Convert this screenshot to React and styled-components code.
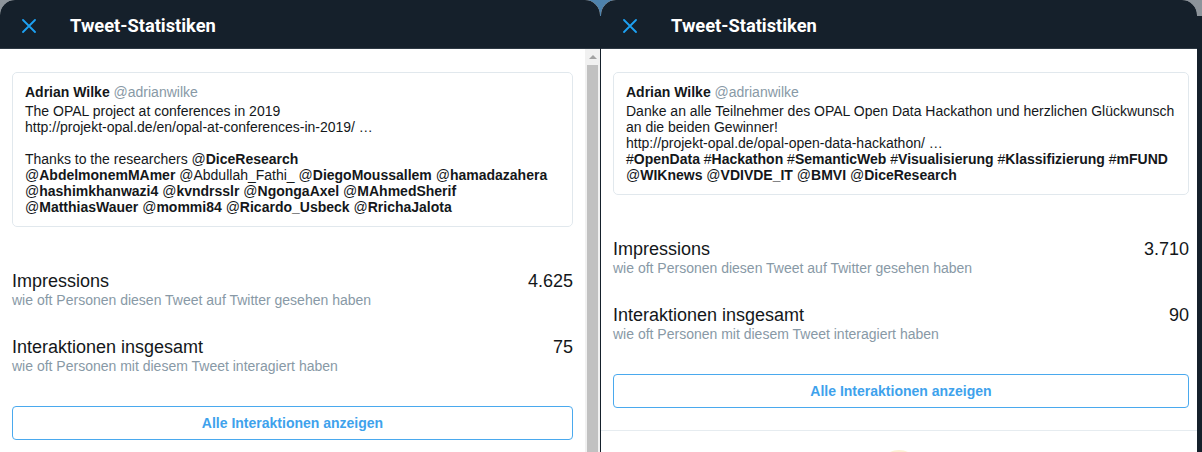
import React from "react";
import styled, { createGlobalStyle } from "styled-components";

const GlobalStyle = createGlobalStyle`
  html, body { margin: 0; padding: 0; height: 100%; overflow: hidden; }
  body { font-family: "Liberation Sans", Arial, sans-serif; }
  #root { height: 100%; }
`;

const Stage = styled.div`
  display: flex;
  height: 452px;
  overflow: hidden;
  background:
    linear-gradient(#15202b, #15202b) 0 16px / 100% 100% no-repeat,
    linear-gradient(90deg, #8d949b 0%, #75879a 40%, #4d82ad 50%, #75879a 60%, #8d949b 100%);
`;

const Panel = styled.section`
  flex: none;
  width: ${(p) => p.$w}px;
  margin-right: ${(p) => p.$mr}px;
  display: flex;
  flex-direction: column;
  border-radius: 15px 15px 0 0;
  overflow: hidden;
  background: #fff;
`;

const Header = styled.header`
  flex: none;
  height: 45px;
  padding: 3px 0 0 22px;
  display: flex;
  align-items: center;
  background: #15202b;
  border-bottom: 1px solid #2e3944;
`;

const CloseButton = styled.span`
  display: flex;
  width: 14px;
  height: 14px;
`;

const Title = styled.h1`
  margin: 0 0 0 34px;
  font-family: Roboto, "Liberation Sans", Arial, sans-serif;
  font-size: 18.3px;
  font-weight: 700;
  color: #fff;
  line-height: 22px;
`;

const Body = styled.div`
  flex: 1;
  display: flex;
  min-height: 0;
`;

const Main = styled.div`
  flex: 1;
  display: flex;
  flex-direction: column;
`;

const Padded = styled.div`
  padding: 23px ${(p) => p.$pr}px 0 12px;
  display: flex;
  flex-direction: column;
`;

const Card = styled.article`
  border: 1px solid #e1e8ed;
  border-radius: 5px;
  padding: 10px 12px 11px;
  color: #14171a;
  font-size: 14px;
`;

const NameLine = styled.div`
  line-height: 18px;
  white-space: nowrap;
`;

const Name = styled.b`
  font-weight: 700;
`;

const Handle = styled.span`
  color: #8899a6;
`;

const Text = styled.p`
  margin: 2px 0 0;
  line-height: 16px;
  white-space: nowrap;
`;

const Strong = styled.b`
  font-weight: 700;
`;

const Stats = styled.div`
  margin-top: 30px;
  display: flex;
  flex-direction: column;
`;

const StatRow = styled.div`
  display: flex;
  justify-content: space-between;
  padding: 14px 0;
`;

const StatText = styled.div`
  display: flex;
  flex-direction: column;
`;

const StatLabel = styled.div`
  font-size: 18px;
  line-height: 20px;
  color: #14171a;
`;

const StatHint = styled.div`
  font-size: 14px;
  line-height: 18px;
  color: #8899a6;
`;

const StatValue = styled.div`
  font-size: 18px;
  line-height: 20px;
  color: #14171a;
`;

const ActionButton = styled.button`
  margin-top: 17px;
  height: 34px;
  width: 100%;
  border: 1px solid #4aa9ee;
  border-radius: 4px;
  background: #fff;
  color: #3ea2ec;
  font-family: "Liberation Sans", Arial, sans-serif;
  font-size: 14px;
  font-weight: 700;
  padding: 0;
`;

const Divider = styled.hr`
  margin: 22px 0 0;
  border: 0;
  border-top: 1px solid #e6ecf0;
  height: 0;
`;

const Footer = styled.div`
  display: flex;
  justify-content: center;
  padding-top: 19px;
`;

const Badge = styled.span`
  width: 30px;
  height: 20px;
  border-radius: 50% 50% 4px 4px;
  background: #fdf1d4;
`;

const Scrollbar = styled.div`
  flex: none;
  width: 15px;
  background: #f1f1f1;
  display: flex;
  flex-direction: column;
  align-items: center;
`;

const ScrollArrow = styled.span`
  flex: none;
  height: 15px;
  display: flex;
  align-items: center;
  justify-content: center;
  &::before {
    content: "";
    width: 0;
    height: 0;
    border-left: 4px solid transparent;
    border-right: 4px solid transparent;
    border-bottom: 4px solid #a3a3a3;
  }
`;

const ScrollThumb = styled.span`
  flex: 1;
  align-self: stretch;
  margin: 1px 2px 0;
  background: #c1c1c1;
`;

const CloseIcon = () => (
  <svg width="14" height="14" viewBox="0 0 14 14" fill="none">
    <path d="M1 1L13 13M13 1L1 13" stroke="#1da1f2" strokeWidth="1.8" strokeLinecap="round" />
  </svg>
);

const Tag = ({ s, name }) => (
  <>
    {s}
    <Strong>{name}</Strong>
  </>
);

const leftTweet = (
  <>
    The OPAL project at conferences in 2019
    <br />
    http://projekt-opal.de/en/opal-at-conferences-in-2019/ …
    <br />
    <br />
    Thanks to the researchers <Tag s="@" name="DiceResearch" />
    <br />
    <Tag s="@" name="AbdelmonemMAmer" /> @Abdullah_Fathi_ <Tag s="@" name="DiegoMoussallem" />{" "}
    <Tag s="@" name="hamadazahera" />
    <br />
    <Tag s="@" name="hashimkhanwazi4" /> <Tag s="@" name="kvndrsslr" /> <Tag s="@" name="NgongaAxel" />{" "}
    <Tag s="@" name="MAhmedSherif" />
    <br />
    <Tag s="@" name="MatthiasWauer" /> <Tag s="@" name="mommi84" /> <Tag s="@" name="Ricardo_Usbeck" />{" "}
    <Tag s="@" name="RrichaJalota" />
  </>
);

const rightTweet = (
  <>
    Danke an alle Teilnehmer des OPAL Open Data Hackathon und herzlichen Glückwunsch
    <br />
    an die beiden Gewinner!
    <br />
    http://projekt-opal.de/opal-open-data-hackathon/ …
    <br />
    <Tag s="#" name="OpenData" /> <Tag s="#" name="Hackathon" /> <Tag s="#" name="SemanticWeb" />{" "}
    <Tag s="#" name="Visualisierung" /> <Tag s="#" name="Klassifizierung" /> <Tag s="#" name="mFUND" />
    <br />
    <Tag s="@" name="WIKnews" /> <Tag s="@" name="VDIVDE_IT" /> <Tag s="@" name="BMVI" />{" "}
    <Tag s="@" name="DiceResearch" />
  </>
);

const StatsPanel = ({ width, marginRight, padRight, tweet, impressions, interactions, scrollbar }) => (
  <Panel $w={width} $mr={marginRight}>
    <Header>
      <CloseButton>
        <CloseIcon />
      </CloseButton>
      <Title>Tweet-Statistiken</Title>
    </Header>
    <Body>
      <Main>
        <Padded $pr={padRight}>
          <Card>
            <NameLine>
              <Name>Adrian Wilke</Name> <Handle>@adrianwilke</Handle>
            </NameLine>
            <Text>{tweet}</Text>
          </Card>
          <Stats>
            <StatRow>
              <StatText>
                <StatLabel>Impressions</StatLabel>
                <StatHint>wie oft Personen diesen Tweet auf Twitter gesehen haben</StatHint>
              </StatText>
              <StatValue>{impressions}</StatValue>
            </StatRow>
            <StatRow>
              <StatText>
                <StatLabel>Interaktionen insgesamt</StatLabel>
                <StatHint>wie oft Personen mit diesem Tweet interagiert haben</StatHint>
              </StatText>
              <StatValue>{interactions}</StatValue>
            </StatRow>
          </Stats>
          <ActionButton>Alle Interaktionen anzeigen</ActionButton>
        </Padded>
        <Divider />
        <Footer>
          <Badge />
        </Footer>
      </Main>
      {scrollbar && (
        <Scrollbar>
          <ScrollArrow />
          <ScrollThumb />
        </Scrollbar>
      )}
    </Body>
  </Panel>
);

export default function App() {
  return (
    <>
      <GlobalStyle />
      <Stage>
        <StatsPanel
          width={600}
          marginRight={1}
          padRight={12}
          tweet={leftTweet}
          impressions="4.625"
          interactions="75"
          scrollbar
        />
        <StatsPanel
          width={596}
          marginRight={0}
          padRight={8}
          tweet={rightTweet}
          impressions="3.710"
          interactions="90"
        />
      </Stage>
    </>
  );
}
